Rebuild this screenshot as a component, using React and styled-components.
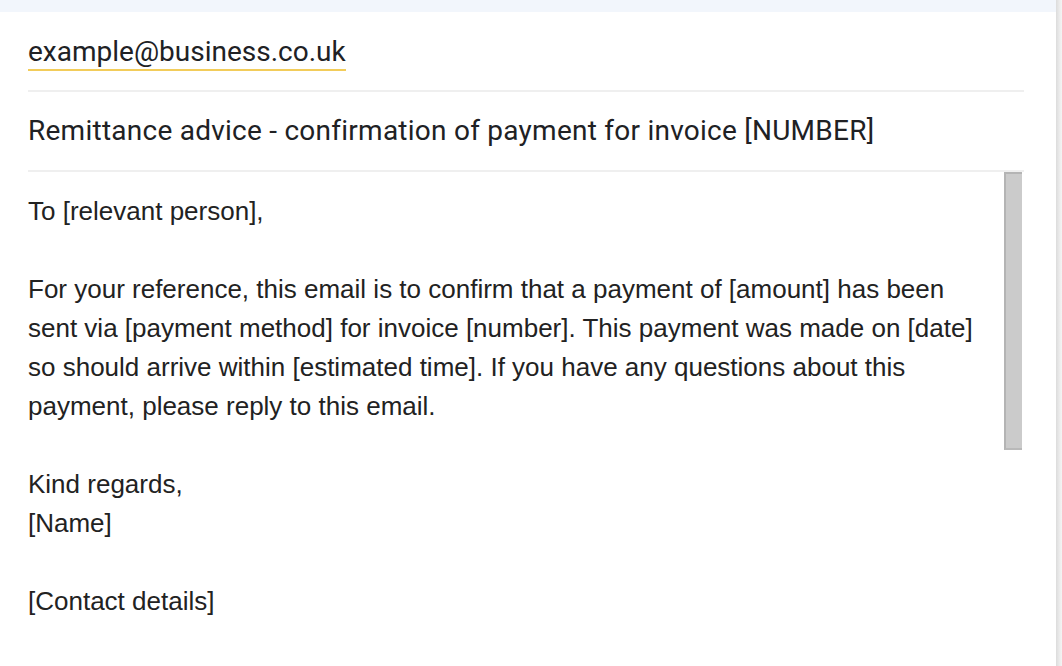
import React from "react";
import styled, { createGlobalStyle } from "styled-components";

const Global = createGlobalStyle`
  html, body { margin: 0; padding: 0; background: #ffffff; }
  body { width: 1062px; height: 666px; overflow: hidden; }
`;

const Page = styled.div`
  display: flex;
  width: 1062px;
  height: 666px;
  background: #ffffff;
`;

const Main = styled.div`
  flex: 1;
  display: flex;
  flex-direction: column;
  min-width: 0;
`;

const TopBand = styled.div`
  height: 12px;
  background: #f2f6fc;
`;

const Compose = styled.div`
  flex: 1;
  display: flex;
  flex-direction: column;
  padding: 0 32px 0 28px;
`;

const FieldRow = styled.div`
  display: flex;
  align-items: flex-start;
  padding: ${(p) => p.$pad};
  border-bottom: 2px solid #efefef;
`;

const EmailChip = styled.span`
  display: inline-block;
  font-family: Roboto, "Open Sans", sans-serif;
  font-size: 28px;
  line-height: 32px;
  color: #202124;
  padding-bottom: 1px;
  border-bottom: 2px solid #f2cc5a;
`;

const Subject = styled.span`
  font-family: Roboto, "Open Sans", sans-serif;
  font-size: 28px;
  line-height: 32px;
  letter-spacing: 0.25px;
  color: #202124;
`;

const BodyArea = styled.div`
  flex: 1;
  display: flex;
  align-items: flex-start;
`;

const BodyText = styled.div`
  flex: 1;
  padding: 20px 24px 0 0;
  font-family: "Liberation Sans", Arial, sans-serif;
  font-size: 26px;
  line-height: 39px;
  color: #222222;
`;

const Para = styled.p`
  margin: 0;
  min-height: 39px;
`;

const ScrollTrack = styled.div`
  width: 20px;
  display: flex;
`;

const Thumb = styled.div`
  width: 18px;
  height: 278px;
  box-sizing: border-box;
  background: #cbcbcb;
  border-left: 2px solid #b4b4b4;
  border-top: 2px solid #b4b4b4;
  border-bottom: 2px solid #b9b9b9;
`;

const EdgeShadow = styled.div`
  width: 6px;
  background: linear-gradient(to right, #dcdcdc, #ececec 60%, #f4f4f4);
`;

export default function App() {
  return (
    <>
      <Global />
      <Page>
        <Main>
          <TopBand />
          <Compose>
            <FieldRow $pad="24px 0 19px 0">
              <EmailChip>example@business.co.uk</EmailChip>
            </FieldRow>
            <FieldRow $pad="23px 0 23px 0">
              <Subject>Remittance advice - confirmation of payment for invoice [NUMBER]</Subject>
            </FieldRow>
            <BodyArea>
              <BodyText>
                <Para>To [relevant person],</Para>
                <Para />
                <Para>
                  For your reference, this email is to confirm that a payment of [amount] has been
                  sent via [payment method] for invoice [number]. This payment was made on [date]
                  so should arrive within [estimated time]. If you have any questions about this
                  payment, please reply to this email.
                </Para>
                <Para />
                <Para>Kind regards,</Para>
                <Para>[Name]</Para>
                <Para />
                <Para>[Contact details]</Para>
              </BodyText>
              <ScrollTrack>
                <Thumb />
              </ScrollTrack>
            </BodyArea>
          </Compose>
        </Main>
        <EdgeShadow />
      </Page>
    </>
  );
}
